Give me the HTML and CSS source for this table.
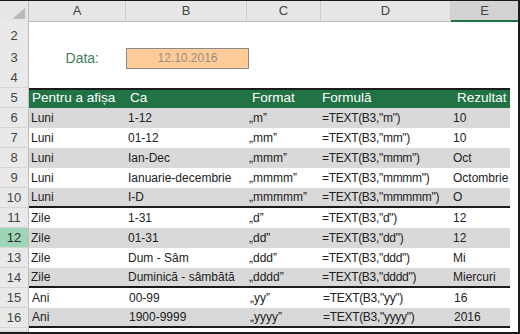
FILE: index.html
```html
<!DOCTYPE html>
<html lang="ro">
<head>
<meta charset="utf-8">
<title>TEXT – formate de dată</title>
<link rel="stylesheet" href="styles.css">
</head>
<body>
<div class="sheet">
  <div class="row colhead">
    <div class="corner"><svg width="29" height="20" viewBox="0 0 29 20"><polygon points="13,18 26,18 26,7" fill="#b9b9b9"/></svg></div>
    <div>A</div><div>B</div><div>C</div><div>D</div><div class="sel">E</div>
  </div>
  <div class="row r2"><div class="rh">2</div><div></div><div></div><div></div><div></div><div></div><div></div></div>
  <div class="row"><div class="rh">3</div><div class="label">Data:</div><div class="input">12.10.2016</div><div></div><div></div><div></div><div></div></div>
  <div class="row"><div class="rh">4</div><div></div><div></div><div></div><div></div><div></div><div></div></div>
  <div class="row hdr"><div class="rh">5</div><div class="c h1">Pentru a afișa</div><div class="c h2">Ca</div><div class="c h3">Format</div><div class="c d h4">Formulă</div><div class="c h5">Rezultat</div><div></div></div>
  <div class="row g"><div class="rh">6</div><div class="c">Luni</div><div class="c">1-12</div><div class="c">„m”</div><div class="c d">=TEXT(B3,"m")</div><div class="c">10</div><div></div></div>
  <div class="row"><div class="rh">7</div><div class="c">Luni</div><div class="c">01-12</div><div class="c">„mm”</div><div class="c d">=TEXT(B3,"mm")</div><div class="c">10</div><div></div></div>
  <div class="row g"><div class="rh">8</div><div class="c">Luni</div><div class="c">Ian-Dec</div><div class="c">„mmm”</div><div class="c d">=TEXT(B3,"mmm")</div><div class="c">Oct</div><div></div></div>
  <div class="row"><div class="rh">9</div><div class="c">Luni</div><div class="c">Ianuarie-decembrie</div><div class="c">„mmmm”</div><div class="c d">=TEXT(B3,"mmmm")</div><div class="c">Octombrie</div><div></div></div>
  <div class="row g sep"><div class="rh">10</div><div class="c">Luni</div><div class="c">I-D</div><div class="c">„mmmmm”</div><div class="c d">=TEXT(B3,"mmmmm")</div><div class="c">O</div><div></div></div>
  <div class="row"><div class="rh">11</div><div class="c">Zile</div><div class="c">1-31</div><div class="c">„d”</div><div class="c d">=TEXT(B3,"d")</div><div class="c">12</div><div></div></div>
  <div class="row g"><div class="rh act">12</div><div class="c">Zile</div><div class="c">01-31</div><div class="c">„dd”</div><div class="c d">=TEXT(B3,"dd")</div><div class="c">12</div><div></div></div>
  <div class="row"><div class="rh">13</div><div class="c">Zile</div><div class="c">Dum - Sâm</div><div class="c">„ddd”</div><div class="c d">=TEXT(B3,"ddd")</div><div class="c">Mi</div><div></div></div>
  <div class="row g sep"><div class="rh">14</div><div class="c">Zile</div><div class="c">Duminică - sâmbătă</div><div class="c">„dddd”</div><div class="c d">=TEXT(B3,"dddd")</div><div class="c">Miercuri</div><div></div></div>
  <div class="row ind"><div class="rh">15</div><div class="c">Ani</div><div class="c">00-99</div><div class="c">„yy”</div><div class="c d">=TEXT(B3,"yy")</div><div class="c">16</div><div></div></div>
  <div class="row g sep ind"><div class="rh">16</div><div class="c">Ani</div><div class="c">1900-9999</div><div class="c">„yyyy”</div><div class="c d">=TEXT(B3,"yyyy")</div><div class="c">2016</div><div></div></div>
  <div class="row tail"><div class="rh"></div><div></div><div></div><div></div><div></div><div></div><div></div></div>
</div>
</body>
</html>
```

FILE: styles.css
```css
html, body {
  margin: 0;
  padding: 0;
  background: #ffffff;
}

body {
  font-family: "Liberation Sans", Arial, sans-serif;
  color: #222222;
}

.sheet {
  width: 518px;
  border-top: 1px solid #1b1b1b;
  border-right: 2px solid #1b1b1b;
  border-bottom: 2px solid #1b1b1b;
}

.row {
  display: grid;
  grid-template-columns: 29px 97px 121px 74px 130px 59px 8px;
  height: 20px;
}

.row > div {
  box-sizing: border-box;
  white-space: nowrap;
  font-size: 12px;
  line-height: 20px;
  color: #222222;
}

/* column letters */
.colhead > div {
  background: #e6e6e6;
  border-right: 1px solid #cdcdcd;
  border-bottom: 1px solid #bcbcbc;
  text-align: center;
  font-size: 13px;
  line-height: 19px;
  color: #444444;
}

.colhead .corner {
  border-right: 1px solid #bdbdbd;
  display: flex;
}

.colhead .sel {
  grid-column: span 2;
  background: #d3d3d3;
  border-right: none;
  border-bottom: 2px solid #217346;
}

/* row numbers */
.row .rh {
  background: #e9e9e9;
  border-right: 1px solid #bdbdbd;
  border-bottom: 1px solid #d6d6d6;
  text-align: center;
  font-size: 13px;
  line-height: 19px;
  color: #444444;
}

.row .rh.act {
  background: #9fd5b7;
  color: #2b2b2b;
}

.r2 {
  height: 27px;
}

.r2 .rh {
  line-height: 30px;
}

.tail {
  height: 4px;
}

/* input cells */
.row .label {
  text-align: right;
  padding-right: 27px;
  font-size: 14px;
  color: #3e7f5c;
}

.row .input {
  background: #ffcc99;
  border: 1px solid #8a8a8a;
  text-align: center;
  line-height: 18px;
  color: #9a8b80;
  font-size: 12px;
  width: 123px;
  height: 21px;
}

/* table */
.row .c {
  padding-left: 2px;
}

.row .d {
  padding-left: 1px;
  letter-spacing: -0.3px;
}

.hdr .c {
  background: #217346;
  color: #ffffff;
  font-size: 13.5px;
  line-height: 16px;
  border-top: 2px solid #1b1b1b;
}

.hdr .h1 { padding-left: 3px; }
.hdr .h2 { padding-left: 4px; }
.hdr .h3 { padding-left: 5px; }
.hdr .h4 { padding-left: 1px; letter-spacing: 0; }
.hdr .h5 { padding-left: 6px; }

.g .c {
  background: #d9d9d9;
}

.sep .c {
  border-bottom: 2px solid #1b1b1b;
  line-height: 18px;
}

.ind .c {
  padding-left: 3px;
}

.ind .c:first-of-type {
  padding-left: 4px;
}

.ind .d {
  padding-left: 2px;
}
```
